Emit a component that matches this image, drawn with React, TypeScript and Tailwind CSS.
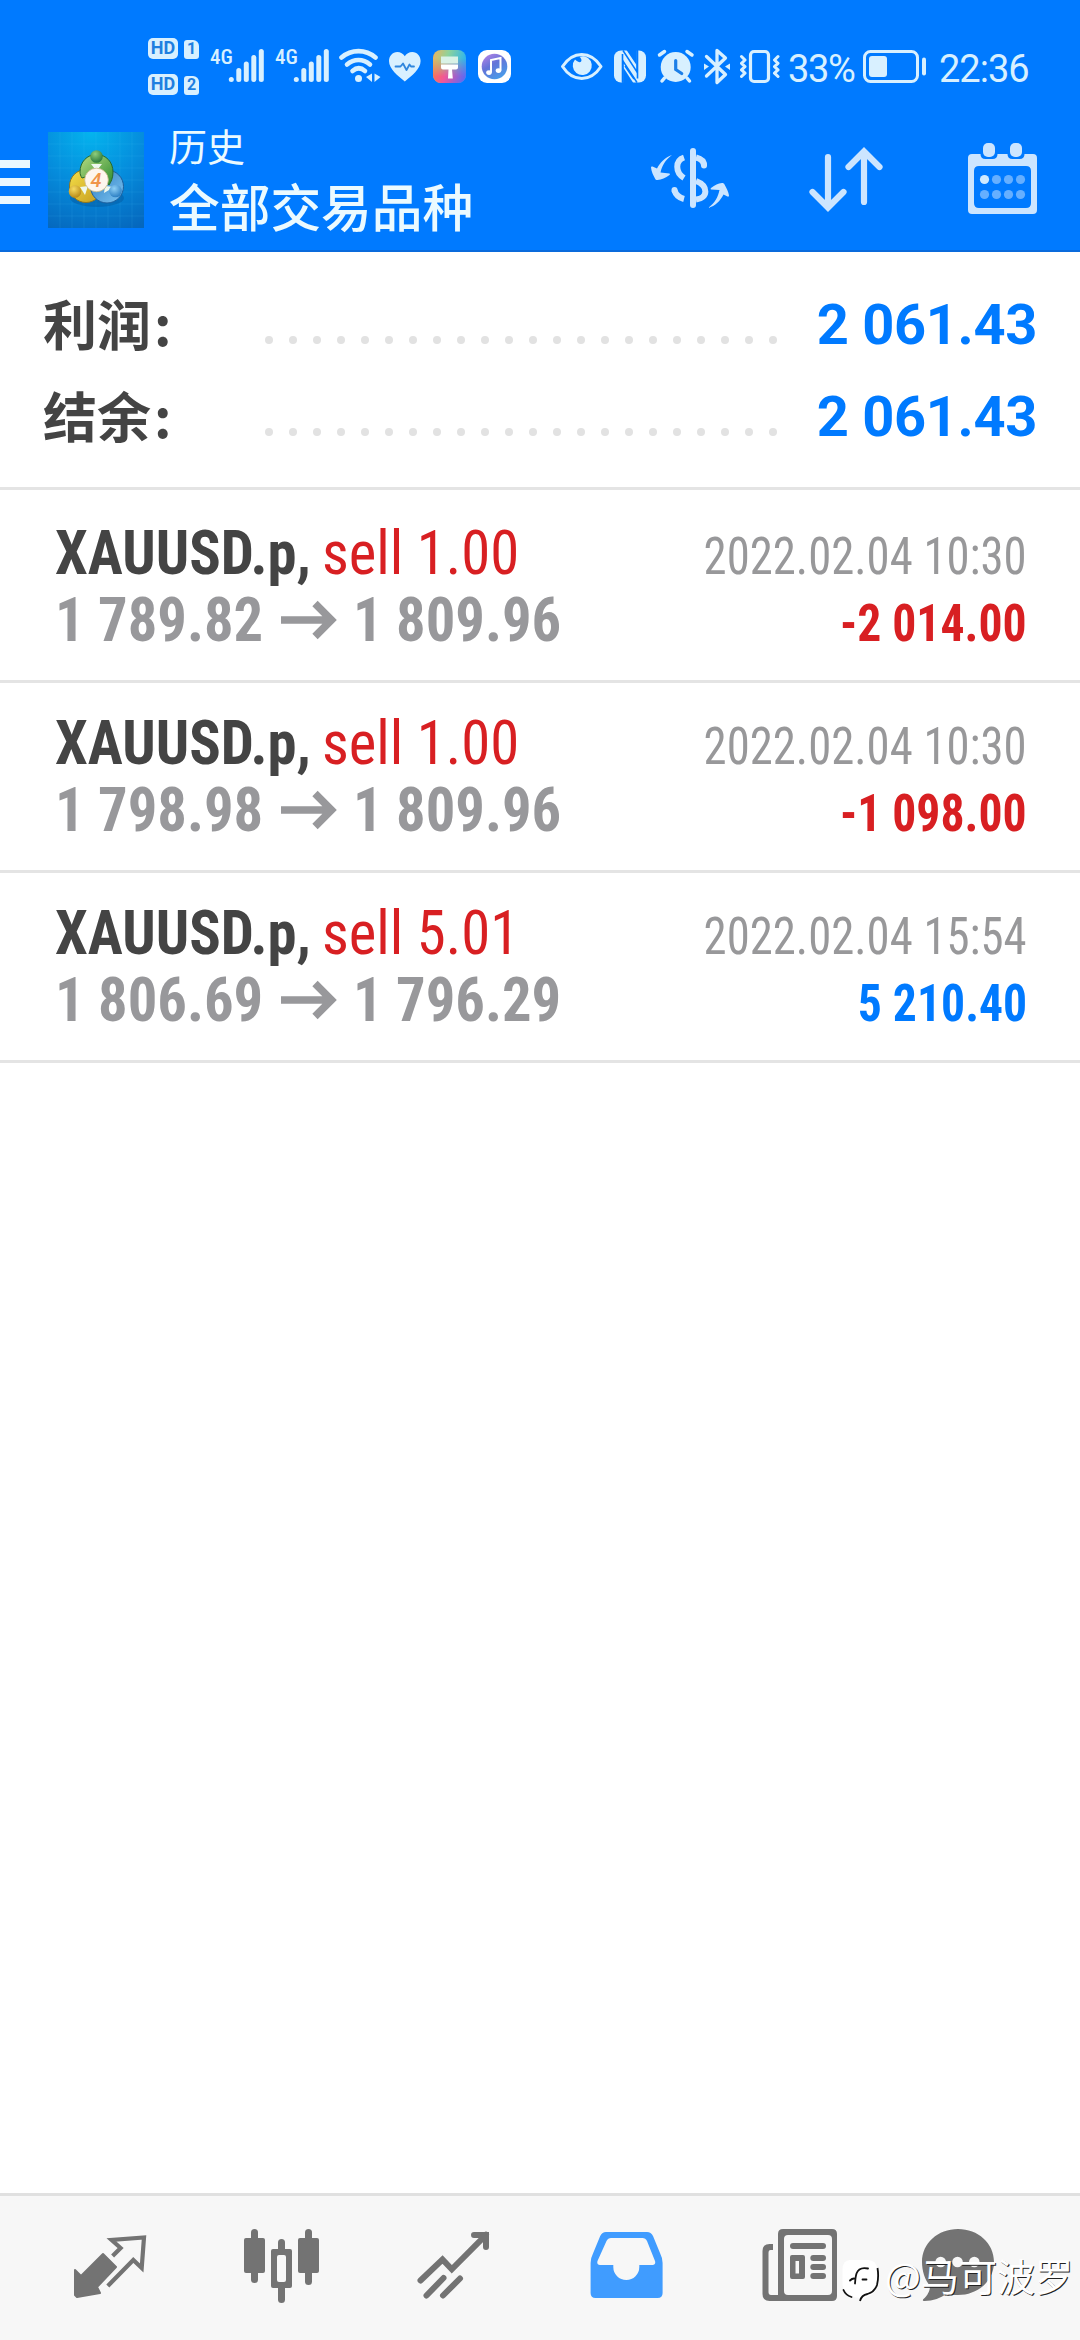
import type { ReactNode } from 'react'

const ICE = '#d8f0ff'
const GREY = '#737373'

/* Icon slot: its viewBox is a window on the 1080px wide screen grid. */
function Slot({ x, y, w, h, children }: { x: number; y: number; w: number; h: number; children: ReactNode }) {
  return (
    <svg width={w} height={h} viewBox={`${x} ${y} ${w} ${h}`} className="block shrink-0" fill="none">
      {children}
    </svg>
  )
}

function HdBadge({ n }: { n: string }) {
  return (
    <div className="flex h-[21px] items-end gap-[6px]">
      <span className="flex h-[21px] w-[30px] items-center justify-center rounded-[5px] bg-[#d8f0ff] text-[18px] leading-none font-bold text-[#1f7fe0]">
        HD
      </span>
      <span className="flex h-[19px] w-[15px] items-center justify-center rounded-[3px] rounded-tr-[6px] bg-[#d8f0ff] text-[16px] leading-none font-bold text-[#1f7fe0]">
        {n}
      </span>
    </div>
  )
}

function Signal({ x }: { x: number }) {
  const bars = [
    [0, 79.4],
    [7.5, 70.5],
    [15, 64],
    [22.5, 57.5],
    [30, 51.5],
  ]
  return (
    <div className="relative">
      <Slot x={x} y={24} w={65} h={84}>
        {bars.map(([dx, top]) => (
          <line key={dx} x1={x + 22.3 + dx} x2={x + 22.3 + dx} y1={top} y2={79.5} stroke={ICE} strokeWidth="5" strokeLinecap="round" />
        ))}
      </Slot>
      <span className="absolute top-[24px] left-px font-['Roboto_Condensed'] text-[21px] leading-[18px] font-medium text-[#d8f0ff]">4G</span>
    </div>
  )
}

function StatusBar() {
  return (
    <div className="flex h-[108px] items-center pt-6 pl-[148px]">
      <div className="flex w-[61px] flex-col gap-[15px]">
        <HdBadge n="1" />
        <HdBadge n="2" />
      </div>
      <Signal x={209} />
      <Signal x={274} />
      {/* wifi */}
      <Slot x={339} y={24} w={48} h={84}>
        <g stroke={ICE} strokeWidth="4.6" strokeLinecap="round">
          <path d="M341.5 57.500c10-8.500 24-8.500 34 0" />
          <path d="M347 64.500c7-6 16-6 23 0" />
          <path d="M352.500 71c4-3.500 8.500-3.500 12.500 0" />
        </g>
        <circle cx="358.500" cy="78.600" r="3.500" fill={ICE} />
        <path d="M372 73.500v8.500l-6-5zM374.500 73.500v8.500l6-5z" fill={ICE} />
      </Slot>
      {/* heart */}
      <Slot x={387} y={24} w={38} h={84}>
        <path d="M404.800 81.500C398 76 389 69 389 61c0-5 3.500-9 8.300-9 3.200 0 6 1.600 7.500 4.300 1.500-2.700 4.300-4.300 7.500-4.300 4.800 0 8.300 4 8.300 9 0 8-9 15-15.800 20.500z" fill={ICE} />
        <path d="M395.500 66.500h5l2.500-3 3.500 6.500 3-5.500 1.500 2h3" stroke="#2f86dd" strokeWidth="1.800" strokeLinecap="round" strokeLinejoin="round" />
      </Slot>
      {/* themes app */}
      <Slot x={425} y={24} w={48} h={84}>
        <defs>
          <linearGradient id="t1" x1="0" y1="0" x2="1" y2="0.300">
            <stop offset="0" stopColor="#f2b25a" />
            <stop offset="0.450" stopColor="#8fd39a" />
            <stop offset="1" stopColor="#2bb4f0" />
          </linearGradient>
          <linearGradient id="t2" x1="0" y1="0.400" x2="1" y2="0.800">
            <stop offset="0" stopColor="#ff7a3d" />
            <stop offset="0.450" stopColor="#f0569a" />
            <stop offset="1" stopColor="#5a6af5" />
          </linearGradient>
          <linearGradient id="tm" x1="0" y1="0" x2="0" y2="1">
            <stop offset="0.250" stopColor="#000" />
            <stop offset="0.800" stopColor="#fff" />
          </linearGradient>
          <mask id="m1">
            <rect x="433" y="50" width="33" height="33" fill="url(#tm)" />
          </mask>
        </defs>
        <rect x="433" y="50" width="33" height="33" rx="8" fill="url(#t1)" />
        <rect x="433" y="50" width="33" height="33" rx="8" fill="url(#t2)" mask="url(#m1)" />
        <path d="M441 56.500h17v7h-17z" fill="#d9f2e6" />
        <path d="M441 64.500h17v3q0 2-2 2h-4l.8 9h-4.800l.5-9h-5.500q-2 0-2-2z" fill="#fff" />
      </Slot>
      {/* music app */}
      <Slot x={473} y={24} w={86} h={84}>
        <defs>
          <linearGradient id="mu" x1="0" y1="0" x2="0.600" y2="1">
            <stop offset="0" stopColor="#c084e8" />
            <stop offset="0.500" stopColor="#6474d8" />
            <stop offset="1" stopColor="#4a9ae8" />
          </linearGradient>
        </defs>
        <rect x="478" y="50" width="33" height="33" rx="9" fill="#fff" />
        <circle cx="494.500" cy="66.500" r="12.800" fill="url(#mu)" />
        <path d="M491 72.500v-12.500l9.500-2v12.500" stroke="#fff" strokeWidth="2" />
        <ellipse cx="489" cy="72.600" rx="2.800" ry="2.300" fill="#fff" />
        <ellipse cx="498.500" cy="70.600" rx="2.800" ry="2.300" fill="#fff" />
      </Slot>
      {/* eye */}
      <Slot x={559} y={24} w={50} h={84}>
        <path d="M562.500 66.500C573 50.500 590.500 50.500 601 66.500 590.500 82.500 573 82.500 562.500 66.500z" stroke={ICE} strokeWidth="3" strokeLinejoin="round" />
        <path d="M575 59.500a9.500 9.500 0 1 0 13-1.500c-3-2-6.500-2-8.500-1 3.500 2 2.500 9-4.500 2.500z" fill={ICE} />
      </Slot>
      {/* nfc */}
      <Slot x={609} y={24} w={44} h={84}>
        <rect x="614" y="50.500" width="32" height="32" rx="7" fill={ICE} />
        <path d="M622.500 54v28.500M637.500 50v28.500" stroke="#007aff" strokeWidth="1.600" />
        <path d="M623 50.500L637 72v-22M637 82.500L623 61v22" stroke="#007aff" strokeWidth="1.500" />
        <path d="M626.500 50h10v15zM623.300 67.500v15.500h10z" fill="#007aff" />
        <path d="M625 66l9 13" stroke="#007aff" strokeWidth="1.500" />
      </Slot>
      {/* alarm */}
      <Slot x={653} y={24} w={46} h={84}>
        <circle cx="675.700" cy="67" r="15" fill={ICE} />
        <path d="M659.500 55l5-3.500M692 55l-5-3.500M664.500 78l-2.500 3M687 78l2.500 3" stroke={ICE} strokeWidth="3.500" strokeLinecap="round" />
        <path d="M675.700 60.500v9l6 4" stroke="#1c7fe8" strokeWidth="3.200" strokeLinecap="round" />
      </Slot>
      {/* bluetooth */}
      <Slot x={699} y={24} w={38} h={84}>
        <path d="M706.500 56.500l19 18-8.500 8v-32l8.500 7.500-19 18" stroke={ICE} strokeWidth="3.300" strokeLinejoin="round" strokeLinecap="round" />
        <path d="M704 63.500l5 3-5 3.500zM730 63.500l-5 3 5 3.500z" fill={ICE} />
      </Slot>
      {/* vibrate */}
      <Slot x={737} y={24} w={50} h={84}>
        <rect x="750.500" y="51.500" width="18" height="30" rx="3.500" stroke={ICE} strokeWidth="3.200" />
        <path d="M741.500 56.500l3.500 3.500-3.500 3.300 3.500 3.300-3.500 3.300 3.500 3.300-3.500 3.300M778 56.500l-3.500 3.500 3.500 3.300-3.500 3.300 3.500 3.300-3.500 3.300 3.500 3.300" stroke={ICE} strokeWidth="3" strokeLinejoin="round" strokeLinecap="round" />
      </Slot>
      <span className="w-[74px] pt-[5px] pl-px text-[38px] leading-none tracking-[-1.3px] text-[#d8f0ff]">33%</span>
      {/* battery */}
      <Slot x={861} y={24} w={76} h={84}>
        <rect x="864.500" y="51.500" width="53" height="30" rx="6" stroke={ICE} strokeWidth="3" />
        <rect x="869" y="56" width="18" height="21" rx="3" fill={ICE} />
        <rect x="922" y="57.500" width="4" height="18" rx="2" fill={ICE} />
      </Slot>
      <span className="pt-[5px] pl-[2px] text-[38px] leading-none tracking-[-1px] text-[#d8f0ff]">22:36</span>
    </div>
  )
}

function AppLogo() {
  return (
    <svg width="96" height="96" viewBox="48 132 96 96" className="ml-[18px] block shrink-0">
      <defs>
        <radialGradient id="lb" cx="0.450" cy="0" r="1.100">
          <stop offset="0" stopColor="#04b4ee" />
          <stop offset="0.500" stopColor="#058cdc" />
          <stop offset="1" stopColor="#0567bd" />
        </radialGradient>
        <linearGradient id="lg" x1="0" y1="0" x2="1" y2="1">
          <stop offset="0" stopColor="#b9dd84" />
          <stop offset="1" stopColor="#2b8b30" />
        </linearGradient>
        <linearGradient id="ly" x1="0" y1="0" x2="1" y2="1">
          <stop offset="0" stopColor="#f5e04a" />
          <stop offset="1" stopColor="#c49a1c" />
        </linearGradient>
        <linearGradient id="lc" x1="0" y1="0" x2="1" y2="1">
          <stop offset="0" stopColor="#2d7cc0" />
          <stop offset="1" stopColor="#7cc4f2" />
        </linearGradient>
        <radialGradient id="hg" cx="0.400" cy="0.300" r="0.700">
          <stop offset="0" stopColor="#8fce7c" />
          <stop offset="1" stopColor="#2c7a3c" />
        </radialGradient>
        <radialGradient id="hy" cx="0.400" cy="0.300" r="0.700">
          <stop offset="0" stopColor="#f6dc62" />
          <stop offset="1" stopColor="#b98a18" />
        </radialGradient>
        <radialGradient id="hb" cx="0.400" cy="0.300" r="0.700">
          <stop offset="0" stopColor="#8fd0f6" />
          <stop offset="1" stopColor="#2c7fc4" />
        </radialGradient>
      </defs>
      <rect x="48" y="132" width="96" height="96" fill="url(#lb)" />
      <path d="M60 132v96M72 132v96M84 132v96M96 132v96M108 132v96M120 132v96M132 132v96M48 144h96M48 156h96M48 168h96M48 180h96M48 192h96M48 204h96M48 216h96" stroke="#5cc8f5" strokeOpacity="0.120" strokeWidth="1" />
      <ellipse cx="97" cy="198" rx="27" ry="9" fill="#034a8c" opacity="0.350" />
      <circle cx="86" cy="186" r="16.500" fill="url(#ly)" stroke="#8a7424" strokeWidth="1" />
      <circle cx="107" cy="186.500" r="16.500" fill="url(#lc)" stroke="#1c5e9c" strokeWidth="1" />
      <path d="M80 172c0-10 7-17.500 16.500-17.500S113 162 113 172c0 6-2 10-4 13l-10-12-17 5c-1.300-2-2-4-2-6z" fill="url(#lg)" stroke="#27682c" strokeWidth="1" />
      <path d="M91 164h11l-5.500 7zM80 187l8-1-3 9zM104 193l10-6-9-1z" fill="#eef8ee" />
      <circle cx="96.500" cy="156.500" r="6.300" fill="url(#hg)" />
      <circle cx="75" cy="191.500" r="6.300" fill="url(#hy)" />
      <circle cx="115.500" cy="191" r="6.300" fill="url(#hb)" />
      <circle cx="96.500" cy="180" r="11.800" fill="#fdf6ee" stroke="#c9b98a" strokeWidth="0.800" />
      <text x="96" y="187" textAnchor="middle" fontFamily="Roboto" fontStyle="italic" fontWeight="500" fontSize="20" fill="#f0954a">4</text>
    </svg>
  )
}

function AppBar() {
  return (
    <div className="flex h-[144px] items-center">
      <div className="flex w-[30px] flex-col gap-[10px] pt-1">
        <span className="h-2 bg-[#eaf8ff]" />
        <span className="h-2 bg-[#eaf8ff]" />
        <span className="h-2 bg-[#eaf8ff]" />
      </div>
      <AppLogo />
      <div className="ml-[25px] flex w-[431px] flex-col font-['Noto_Sans_CJK_SC',sans-serif] text-[#ebfaff]">
        <span className="-mt-[10px] text-[38px] leading-[60px]">历史</span>
        <span className="text-[50.7px] leading-[60px] font-medium">全部交易品种</span>
      </div>
      {/* currency switch */}
      <Slot x={600} y={108} w={180} h={144}>
        <g stroke="#cce5ff">
          <path d="M693 151v54" strokeWidth="6" strokeLinecap="round" />
          <path d="M684 157.500c-9 3-9 15 0 20.500M696 157.500q8 2 8 8" strokeWidth="6" />
          <path d="M704 164.500v1" strokeWidth="6" strokeLinecap="round" />
          <path d="M696 181c13 5 12 17 0 18.500M684 199q-7.500-2-9.500-8.500" strokeWidth="6" />
          <path d="M674.500 190v0.500" strokeWidth="6" strokeLinecap="round" />
        </g>
        <path d="M672 155c-7 5-10 11-11.500 17.500l9 1q1 .5 0 1.500c-4 3-8 4.500-12 5-1.500 0-2-.5-2.500-1.500-2-3.500-3.500-7-4-11q0-1.500 1.500-1l4.500 2c3-6 8-11 15-13.500z" fill="#cce5ff" />
        <path d="M708 208c7-5 10-11 11.500-18l-8.500-.5q-1-.5 0-1.500c4-3 7-4.500 11-5 1.500 0 2 .5 2.500 1.500 2 3.500 4 7.500 4.500 11q0 1.500-1.500 1l-4-2c-3 6-8 11.500-15.500 13.500z" fill="#cce5ff" />
      </Slot>
      {/* sort */}
      <Slot x={780} y={108} w={150} h={144}>
        <path d="M828 157v50M812.500 192l15.500 15.500 15.500-15.500M864 202v-50M848.500 167l15.500-15.500 15.500 15.500" stroke="#cce5ff" strokeWidth="6.200" strokeLinecap="round" />
      </Slot>
      {/* calendar */}
      <Slot x={930} y={108} w={150} h={144}>
        <path fillRule="evenodd" d="M972 154h61q4 0 4 4v52q0 4-4 4h-61q-4 0-4-4v-52q0-4 4-4zM979 166q-5 0-5 5v32q0 5 5 5h47q5 0 5-5v-32q0-5-5-5z" fill="#cce5ff" />
        <path d="M980.500 148v6q0 5 5 5h7q5 0 5-5v-6zM1007.500 148v6q0 5 5 5h7q5 0 5-5v-6z" fill="#007aff" />
        <rect x="983" y="143" width="12" height="14" rx="5" fill="#cce5ff" />
        <rect x="1010" y="143" width="12" height="14" rx="5" fill="#cce5ff" />
        {[984.5, 996.5, 1008.5, 1020.5].map((cx, i) => (
          <g key={cx}>
            <circle cx={cx} cy="179.500" r="4.600" fill={i === 0 ? '#cfeaff' : '#66afff'} />
            <circle cx={cx} cy="194.500" r="4.600" fill="#66afff" />
          </g>
        ))}
      </Slot>
    </div>
  )
}

function SummaryRow({ label, value }: { label: string; value: string }) {
  return (
    <div className="flex h-[92px] items-baseline">
      <span className="w-[222px] translate-y-[2px] font-['Noto_Sans_CJK_SC',sans-serif] text-[54px] leading-[92px] font-bold text-[#444]">
        {label}
        <span className="ml-[3px]">:</span>
      </span>
      <span className="flex w-[512px] justify-between">
        {Array.from({ length: 22 }, (_, i) => (
          <span key={i} className="size-2 rounded-full bg-[#e2e2e2]" />
        ))}
      </span>
      <span className="ml-auto text-[56px] leading-[80px] font-bold tracking-[-0.35px] text-[#007aff]">{value}</span>
    </div>
  )
}

type Deal = { symbol: string; side: string; from: string; to: string; time: string; profit: string; gain: boolean }

const deals: Deal[] = [
  { symbol: 'XAUUSD.p,', side: 'sell 1.00', from: '1 789.82', to: '1 809.96', time: '2022.02.04 10:30', profit: '-2 014.00', gain: false },
  { symbol: 'XAUUSD.p,', side: 'sell 1.00', from: '1 798.98', to: '1 809.96', time: '2022.02.04 10:30', profit: '-1 098.00', gain: false },
  { symbol: 'XAUUSD.p,', side: 'sell 5.01', from: '1 806.69', to: '1 796.29', time: '2022.02.04 15:54', profit: '5 210.40', gain: true },
]

function DealRow({ d }: { d: Deal }) {
  return (
    <li className="h-[190px] border-b-[3px] border-[#e4e4e4] pt-[26px] pr-[53px] pl-[55px] font-['Roboto_Condensed']">
      <div className="flex h-[67px] items-baseline leading-[67px] whitespace-nowrap">
        <span className="w-[267px] origin-left scale-x-[0.945] text-[62px] font-bold text-[#444]">{d.symbol}</span>
        <span className="origin-left scale-x-[0.947] text-[62px] text-[#d81f22]">{d.side}</span>
        <span className="ml-auto origin-right scale-x-[0.916] text-[51px] text-[#98989a]">{d.time}</span>
      </div>
      <div className="flex h-[67px] items-baseline leading-[67px] font-bold whitespace-nowrap">
        <span className="w-[226px] origin-left scale-x-[0.945] text-[62px] text-[#98989b]">{d.from}</span>
        <svg width="56" height="40" viewBox="0 0 56 40" className="mr-4 block self-center" fill="none">
          <path d="M0 20h51M34 3.500L50.500 20 34 36.500" stroke="#98989b" strokeWidth="7.500" />
        </svg>
        <span className="origin-left scale-x-[0.945] text-[62px] text-[#98989b]">{d.to}</span>
        <span className={d.gain ? 'ml-auto origin-right scale-x-[0.935] text-[51px] text-[#007aff]' : 'ml-auto origin-right scale-x-[0.935] text-[51px] text-[#d81f22]'}>{d.profit}</span>
      </div>
    </li>
  )
}

function NavBar() {
  const h = 144
  const y = 2196
  return (
    <nav className="relative flex h-[147px] border-t-[3px] border-[#e0e0e0] bg-[#f7f7f7] px-6">
      {/* quotes */}
      <Slot x={24} y={y} w={172} h={h}>
        <path d="M103 2254l13 13-19 20 3 6-23 4-2-2v-25l6 6z" fill={GREY} stroke={GREY} strokeWidth="2" strokeLinejoin="round" />
        <path d="M112.600 2256l8-8-9-8 32.400-2.500-2.300 30.500-8.400-8-25.500 26" stroke={GREY} strokeWidth="4.200" strokeLinejoin="miter" />
      </Slot>
      {/* charts */}
      <Slot x={196} y={y} w={172} h={h}>
        <g fill={GREY}>
          <rect x="244" y="2238" width="21" height="35" rx="2" />
          <rect x="251" y="2229" width="7" height="54" rx="3.500" />
          <rect x="298" y="2238" width="21" height="35" rx="2" />
          <rect x="305" y="2229" width="7" height="56" rx="3.500" />
          <rect x="278" y="2239" width="7" height="64" rx="3.500" />
          <rect x="271" y="2249" width="21" height="39" rx="2" />
        </g>
        <rect x="277" y="2255" width="9" height="27" rx="2" fill="#f7f7f7" />
      </Slot>
      {/* trade */}
      <Slot x={368} y={y} w={172} h={h}>
        <g stroke={GREY} strokeWidth="6" strokeLinecap="round">
          <path d="M420.500 2280.500l22-21 9.300 9.800 34.200-34.500M474 2235h12v12" />
          <path d="M426.500 2295.500l17-17.500M443 2295.500l17-17" />
        </g>
      </Slot>
      {/* history */}
      <Slot x={540} y={y} w={172} h={h}>
        <path
          fillRule="evenodd"
          d="M606 2232h41q4 0 6 4l7 17q2.600 5 2.600 10v30q0 5-5 5h-62q-5 0-5-5v-30q0-5 2.600-10l7-17q2-4 5.800-4zM611 2238q-3 0-4.500 3l-9 20q-1 4 2.500 4h13.300v2a13 13 0 0 0 26 0v-2h13.200q3.500 0 2.500-4l-8-20q-1.500-3-4.500-3z"
          fill="#409cff"
        />
      </Slot>
      {/* news */}
      <Slot x={712} y={y} w={172} h={h}>
        <g fill={GREY}>
          <path fillRule="evenodd" d="M783 2229h49q5 0 5 5v62q0 5-5 5h-49zM788 2235q-4 0-4 4v52q0 4 4 4h40q4 0 4-4v-52q0-4-4-4z" />
          <path d="M783 2229q-5 0-5 5v61h-7q-2.500 0-2.500-3v-39q0-3 2-3h2.500v-6h-3.500q-7 0-7 7v43q0 7 7 7h14z" />
          <rect x="790" y="2243" width="36" height="6" rx="3" />
          <path fillRule="evenodd" d="M792 2255h11q2 0 2 2v20q0 2-2 2h-11q-2 0-2-2v-20q0-2 2-2zM795.500 2261v12.500h3.500v-12.500z" />
          <rect x="810.300" y="2255" width="15.700" height="6" rx="3" />
          <rect x="810.300" y="2264" width="15.700" height="6" rx="3" />
          <rect x="810.300" y="2273" width="15.700" height="6" rx="3" />
        </g>
      </Slot>
      {/* messages */}
      <Slot x={884} y={y} w={172} h={h}>
        <path d="M958 2229c20 0 36 14 36 33s-16 33-36 33c-4 0-8-.5-11-1.500-6 4.500-14 7.500-22.500 7.500-2 0-2-1-1-2 4-3.500 6.500-8 6.500-13-5-6-8-15-8-24 0-19 16-33 36-33z" fill={GREY} />
        <circle cx="940.700" cy="2262" r="5.300" fill="#f7f7f7" />
        <circle cx="957.500" cy="2262" r="5.300" fill="#f7f7f7" />
        <circle cx="974.300" cy="2262" r="5.300" fill="#f7f7f7" />
      </Slot>
      <div className="absolute top-[58px] left-[840px] flex items-start">
        <svg width="44" height="50" viewBox="840 2254 44 50" className="block" fill="none">
          <path d="M850 2260h18q9 0 9 10v14q0 10-10 13l-6 5-1-4q-17-2-17.500-14v-14q0-10 7.500-10z" fill="#fff" />
          <path d="M877.500 2268q1.500 9-.5 17-2.500 7-9.500 9-6 1-7.500 7" stroke="#111" strokeWidth="1.800" />
          <path d="M868 2268.500q-9-2-11.500 5-1 3-1.500 10M850 2280.500q2-2 4-2M862.500 2279.500h4M843.500 2290q2 5 8 7" stroke="#111" strokeWidth="1.800" strokeLinecap="round" />
        </svg>
        <span className="-mt-[1px] ml-px font-['Noto_Sans_CJK_SC',sans-serif] text-[38px] leading-[44px] whitespace-nowrap text-white [text-shadow:1px_1px_0_#222]">@马可波罗</span>
      </div>
    </nav>
  )
}

export default function App() {
  return (
    <div className="flex h-[2340px] w-[1080px] flex-col overflow-hidden bg-white font-['Roboto',sans-serif]">
      <header className="h-[252px] shrink-0 bg-[#007aff] shadow-[inset_0_-2px_0_#0a6bdc]">
        <StatusBar />
        <AppBar />
      </header>
      <section className="h-[238px] shrink-0 border-b-[3px] border-[#e4e4e4] pt-[23px] pr-[43px] pl-[43px]">
        <SummaryRow label="利润" value="2 061.43" />
        <SummaryRow label="结余" value="2 061.43" />
      </section>
      <ul className="flex-1 pt-[3px]">
        {deals.map((d) => (
          <DealRow key={d.from} d={d} />
        ))}
      </ul>
      <NavBar />
    </div>
  )
}
